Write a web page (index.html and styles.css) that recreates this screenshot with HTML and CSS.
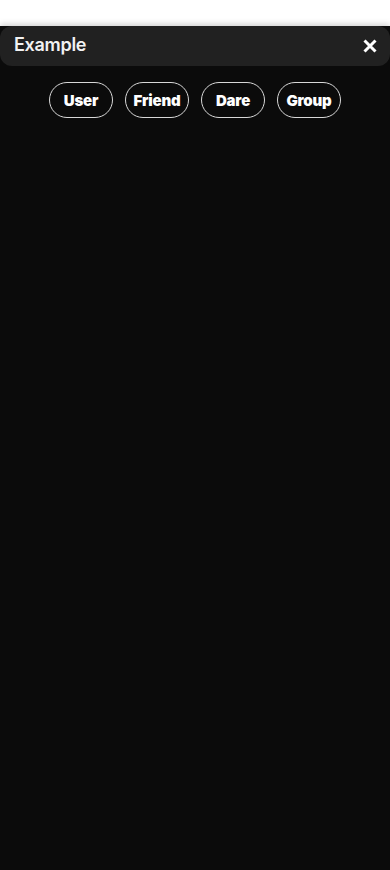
FILE: index.html
```html
<!DOCTYPE html>
<html lang="en">
<head>
    <meta charset="UTF-8">
    <meta name="viewport" content="width=device-width, initial-scale=1.0">
    <title>Example</title>
    <link rel="stylesheet" href="styles.css">
</head>
<body>
    <div class="sheet">
        <div class="header">
            <span class="title">Example</span>
            <button class="close" aria-label="Close">
                <svg width="14" height="14" viewBox="0 0 14 14"><path d="M1.5 1.5 L12.5 12.5 M12.5 1.5 L1.5 12.5" stroke="#fff" stroke-width="3" stroke-linecap="butt"/></svg>
            </button>
        </div>
        <div class="tabs">
            <button class="pill">User</button>
            <button class="pill">Friend</button>
            <button class="pill">Dare</button>
            <button class="pill">Group</button>
        </div>
    </div>
</body>
</html>
```

FILE: styles.css
```css
* {
    margin: 0;
    padding: 0;
    box-sizing: border-box;
}

html, body {
    height: 100%;
}

body {
    background-color: #fff;
    font-family: Inter, "Noto Sans", sans-serif;
    padding-top: 26px;
    overflow: hidden;
}

.sheet {
    height: 100%;
    background-color: #0b0b0b;
    box-shadow: 0 -2px 6px rgba(0, 0, 0, 0.18);
}

.header {
    height: 40px;
    background-color: #212121;
    border-radius: 12px;
    display: flex;
    align-items: center;
    justify-content: space-between;
    padding: 0 13px 0 14px;
}

.title {
    color: #f2f2f2;
    font-size: 18px;
    font-weight: 600;
    letter-spacing: -0.3px;
    margin-bottom: 3px;
}

.close {
    background: none;
    border: none;
    display: flex;
    align-items: center;
}

.tabs {
    display: flex;
    justify-content: center;
    gap: 12px;
    padding-top: 16px;
}

.pill {
    width: 64px;
    height: 36px;
    border: 1px solid #d8d8d8;
    border-radius: 18px;
    background-color: #0b0b0b;
    color: #fff;
    font-family: Inter, "Noto Sans", sans-serif;
    font-size: 15px;
    font-weight: 900;
    letter-spacing: -0.2px;
}
```
